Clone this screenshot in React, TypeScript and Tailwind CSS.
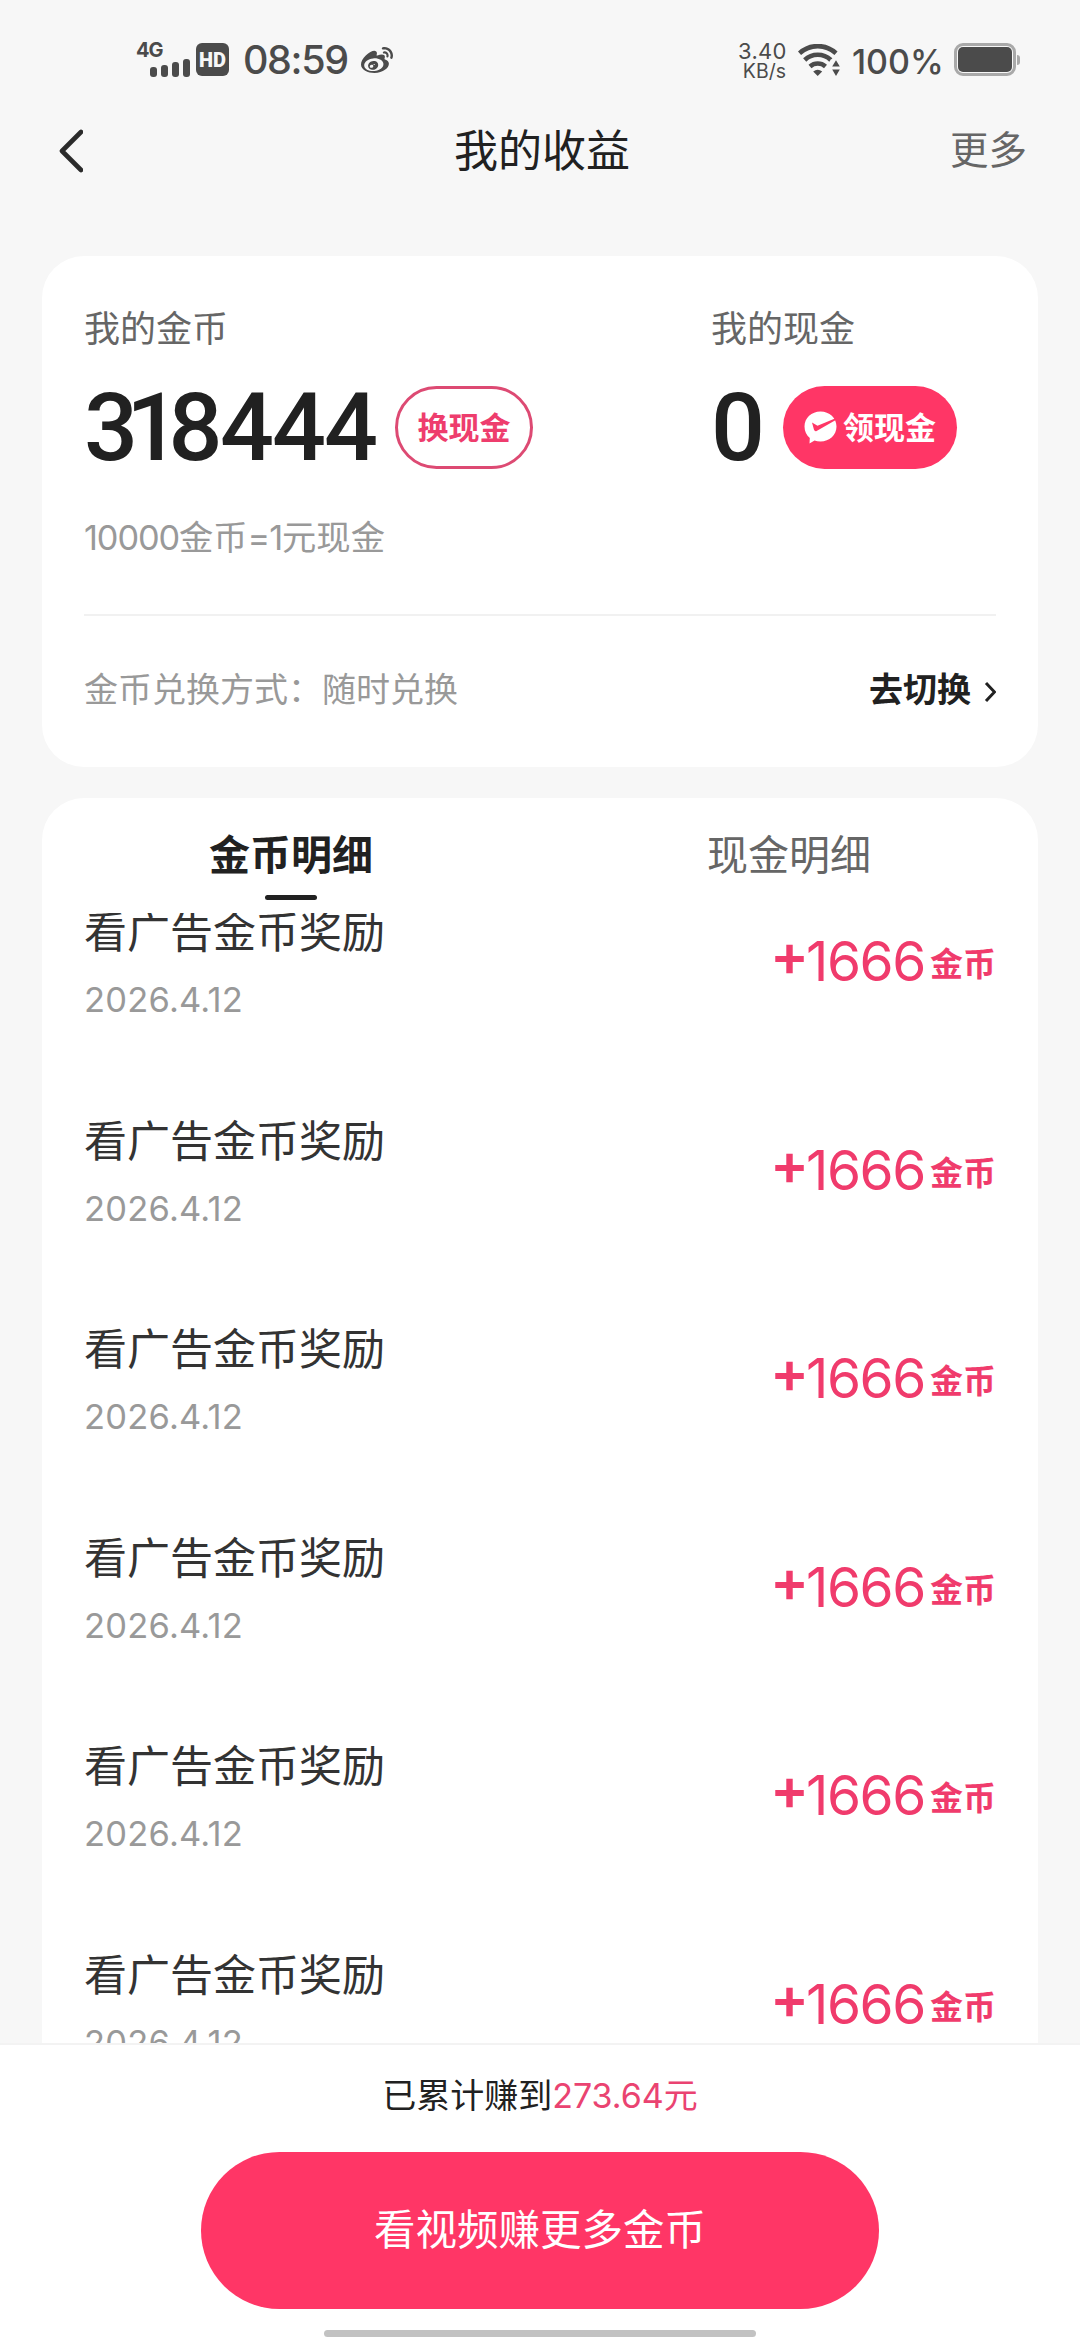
import { FaWeibo } from "react-icons/fa";

const records = Array.from({ length: 6 }, (_, id) => ({
  id,
  title: "看广告金币奖励",
  date: "2026.4.12",
  amount: "1666",
}));

function Wifi() {
  return (
    <svg width="42" height="32" viewBox="0 0 42 32" className="ml-[12px] mt-[44px] shrink-0">
      <g fill="none" stroke="#4b4b4b" strokeWidth="4.6">
        <path d="M1.5 9.2 A27 27 0 0 1 38 9.2" />
        <path d="M6.7 16 A19 19 0 0 1 32.8 16" />
        <path d="M12 22.4 A12 12 0 0 1 27.5 22.4" />
      </g>
      <path d="M15.2 27.6 Q19.7 24 24.2 27.6 L19.7 32 Z" fill="#4b4b4b" />
      <path d="M32.5 15.5 h10 v16.5 h-10 Z" fill="#f7f7f7" />
      <path d="M38 16.2 L41.8 22.6 H34.2 Z M34.2 25.6 H41.8 L38 32 Z" fill="#4b4b4b" />
    </svg>
  );
}

function StatusBar() {
  return (
    <div className="flex h-[100px] items-start text-[#4b4b4b]">
      <div className="ml-[136px] mt-[40px] h-[37px] w-[54px] shrink-0">
        <div className="h-[18px] text-[20px] font-bold leading-[20px] tracking-[-1px]">4G</div>
        <div className="ml-[14px] flex h-[19px] items-end gap-[4px]">
          <i className="h-[10px] w-[7px] rounded-[3px] bg-[#4b4b4b]" />
          <i className="h-[12px] w-[7px] rounded-[3px] bg-[#4b4b4b]" />
          <i className="h-[15px] w-[7px] rounded-[3px] bg-[#4b4b4b]" />
          <i className="h-[18px] w-[7px] rounded-[3px] bg-[#4b4b4b]" />
        </div>
      </div>
      <div className="ml-[6px] mt-[43px] flex h-[33px] w-[33px] items-center justify-center rounded-[6px] bg-[#4b4b4b] font-['Roboto'] text-[20px] font-black text-[#f7f7f7]">
        HD
      </div>
      <div className="ml-[14px] mt-[36px] w-[109px] whitespace-nowrap text-[39.5px] font-medium leading-[48px] tracking-[-1.4px]">
        08:59
      </div>
      <FaWeibo className="ml-[9px] mt-[45px] h-[32px] w-[32px]" />
      <div className="ml-[345px] mt-[41px] w-[48px] whitespace-nowrap text-right">
        <div className="text-[22px] leading-[20px] tracking-[0.3px]">3.40</div>
        <div className="text-[19.5px] leading-[20px]">KB/s</div>
      </div>
      <Wifi />
      <div className="ml-[12px] mt-[41px] w-[92px] whitespace-nowrap text-[34px] font-medium leading-[42px]">100%</div>
      <div className="ml-[10px] mt-[43px] flex items-center">
        <div className="h-[33px] w-[62px] rounded-[9px] border-[3px] border-[#a9a9a9] p-[1px]">
          <div className="h-full w-full rounded-[5px] bg-[#4b4b4b]" />
        </div>
        <div className="ml-px h-[10px] w-[3px] rounded-r bg-[#a9a9a9]" />
      </div>
    </div>
  );
}

function NavBar() {
  return (
    <div className="grid h-[100px] grid-cols-[1fr_auto_1fr] items-center pl-[57px] pr-[53px]">
      <svg width="26" height="44" viewBox="0 0 26 44" className="mt-[2px]">
        <path d="M24 3 L5 22 L24 41" fill="none" stroke="#2b2b2b" strokeWidth="4.6" strokeLinecap="round" strokeLinejoin="round" />
      </svg>
      <div className="mt-[2px] text-[44px] leading-[60px] text-[#212121]">我的收益</div>
      <div className="text-right text-[38.5px] leading-[56px] text-[#666]">更多</div>
    </div>
  );
}

function BubbleCheck() {
  return (
    <svg width="33" height="33" viewBox="0 0 33 33" className="shrink-0">
      <path
        d="M16.5 0.5 C25.5 0.5 32.5 7 32.5 15.5 C32.5 24 25.5 30.5 16.5 30.5 C14.3 30.5 12.3 30.2 10.5 29.5 L5.5 32.5 L5.8 27 C2.5 24.2 0.5 20.2 0.5 15.5 C0.5 7 7.5 0.5 16.5 0.5 Z"
        fill="#fff"
      />
      <path d="M8 11.5 L13.5 14.8 L31 7.5 L31.8 9 L12.6 20 Q10.8 20.8 10 18.8 Z" fill="#ff3666" />
    </svg>
  );
}

function BalanceCard() {
  return (
    <section className="h-[511px] rounded-[42px] bg-white px-[42px] pt-[46px]">
      <div className="flex">
        <div className="w-[627px]">
          <div className="text-[36px] leading-[54px] text-[#666]">我的金币</div>
          <div className="mt-[30px] flex h-[83px] items-center">
            <div className="w-[311px] whitespace-nowrap font-['Roboto'] text-[95px] font-medium leading-[83px] tracking-[-2px] text-[#212121]">
              <span className="tracking-[-11.8px]">31</span>
              <span className="tracking-[-2.4px]">8</span>444
            </div>
            <button className="h-[83px] w-[138px] rounded-full border-[3px] border-[#dd4a73] text-[31px] font-bold leading-[78px] text-[#ee3d6d]">
              换现金
            </button>
          </div>
          <div className="mt-[44px] text-[34.3px] leading-[50px] text-[#999]">
            <span className="tracking-[-1.1px]">10000</span>金币<span className="tracking-[-1.1px]">=1</span>元现金
          </div>
        </div>
        <div>
          <div className="text-[36px] leading-[54px] text-[#666]">我的现金</div>
          <div className="mt-[30px] flex h-[83px] items-center">
            <div className="w-[72px] font-['Roboto'] text-[95px] font-medium leading-[83px] text-[#212121]">0</div>
            <button className="flex h-[83px] w-[174px] items-center gap-[6px] rounded-full bg-[#ff3666] pl-[21px] text-[31px] font-bold leading-[83px] text-white">
              <BubbleCheck />
              领现金
            </button>
          </div>
        </div>
      </div>
      <div className="mt-[51px] h-[2px] bg-[#f1f1f1]" />
      <div className="flex items-center justify-between pt-[49px] text-[34px] leading-[50px]">
        <div className="text-[#999]">金币兑换方式：随时兑换</div>
        <div className="flex items-center font-bold text-[#212121]">
          去切换
          <svg width="12" height="22" viewBox="0 0 12 22" className="ml-[13px] mt-[3px]">
            <path d="M2 2 L10.5 11 L2 20" fill="none" stroke="#212121" strokeWidth="3" />
          </svg>
        </div>
      </div>
    </section>
  );
}

function RecordList() {
  return (
    <section className="mt-[31px] h-[1245px] overflow-hidden rounded-t-[42px] bg-white">
      <div className="grid h-[115px] grid-cols-2 pt-[27px] text-center text-[41px] leading-[60px]">
        <div className="flex flex-col items-center font-bold text-[#212121]">
          金币明细
          <div className="mt-[10px] h-[5px] w-[52px] rounded-full bg-[#212121]" />
        </div>
        <div className="text-[#666]">现金明细</div>
      </div>
      <div className="h-[1130px] overflow-hidden px-[42px]">
        <div className="-mt-[11px]">
          {records.map((r) => (
            <div key={r.id} className="flex h-[208.6px] justify-between">
              <div>
                <div className="text-[43px] leading-[60px] text-[#333]">{r.title}</div>
                <div className="mt-[13px] text-[34.5px] leading-[50px] tracking-[0.2px] text-[#999]">{r.date}</div>
              </div>
              <div className="flex h-[60px] items-baseline pt-[25px] text-[#f03b6c]">
                <span className="-translate-y-[5px] text-[58px] font-semibold leading-[66px] tracking-[-3px]">+</span>
                <span className="text-[55px] leading-[66px] tracking-[-1.4px]">{r.amount}</span>
                <span className="ml-[5px] -translate-y-[5px] text-[33px] font-bold leading-[66px]">金币</span>
              </div>
            </div>
          ))}
        </div>
      </div>
    </section>
  );
}

function BottomBar() {
  return (
    <footer className="flex h-[297px] flex-col items-center border-t-2 border-[#f3f3f3] bg-white">
      <div className="mt-[26px] text-[34px] leading-[50px] text-[#212121]">
        已累计赚到<span className="text-[#ea4371]">273.64元</span>
      </div>
      <button className="mt-[31px] flex h-[157px] w-[678px] shrink-0 items-center justify-center rounded-full bg-[#ff3666] pb-[2px] text-[41.5px] leading-[60px] text-white">
        看视频赚更多金币
      </button>
      <div className="mt-[21px] h-[7px] w-[432px] shrink-0 rounded-full bg-[#c2c2c2]" />
    </footer>
  );
}

export default function App() {
  return (
    <div className="h-[2340px] w-[1080px] overflow-hidden bg-[#f7f7f7] font-['Inter','Noto_Sans_CJK_SC',sans-serif]">
      <StatusBar />
      <NavBar />
      <main className="h-[1843px] px-[42px] pt-[56px]">
        <BalanceCard />
        <RecordList />
      </main>
      <BottomBar />
    </div>
  );
}
